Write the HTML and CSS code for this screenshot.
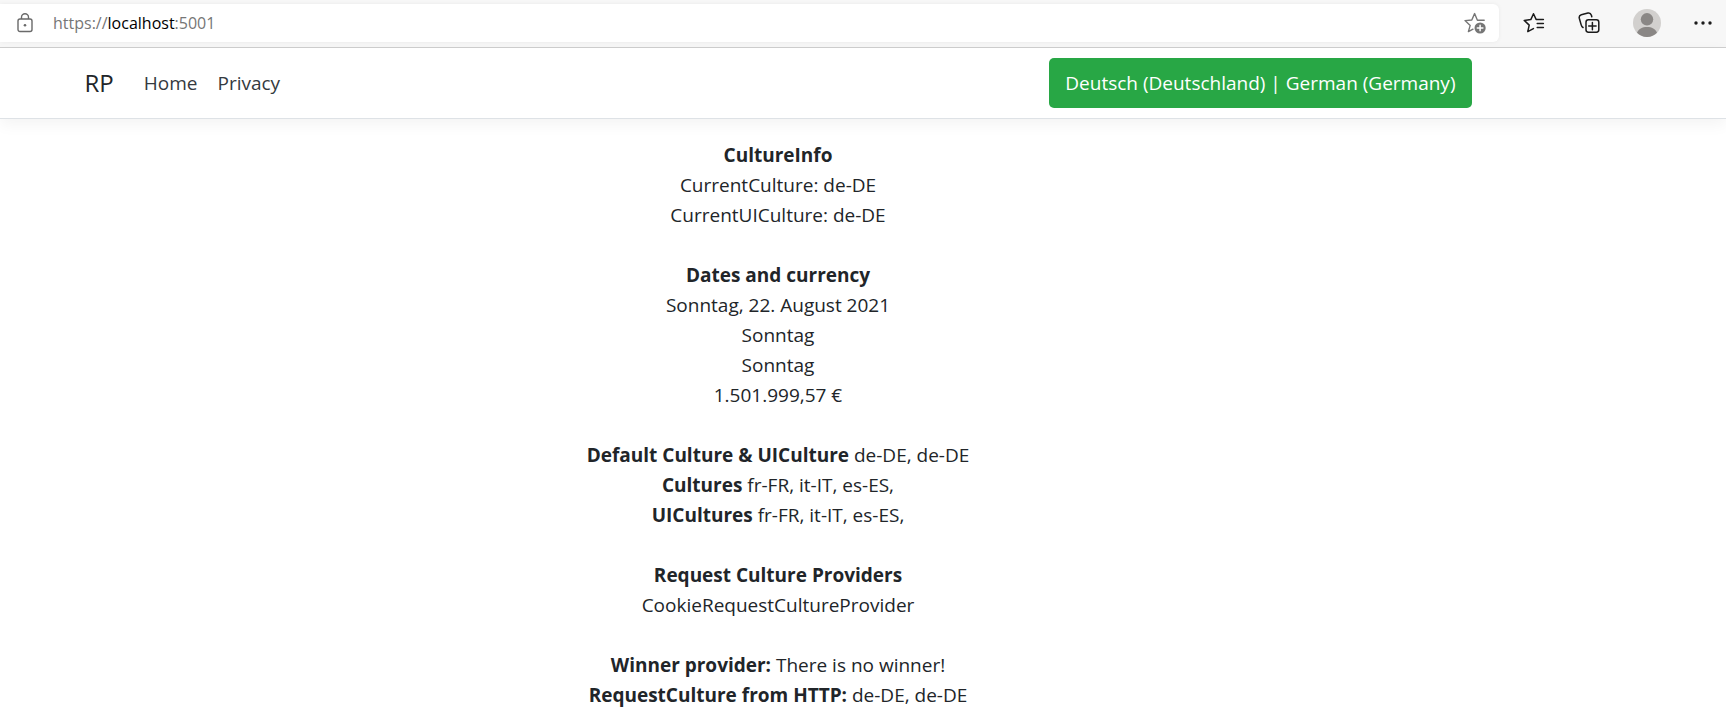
FILE: index.html
```html
<!DOCTYPE html>
<html lang="en">
<head>
<meta charset="utf-8">
<title>Home page - RP</title>
<link rel="stylesheet" href="styles.css">
</head>
<body>
<div class="toolbar">
  <div class="address">
    <svg class="lock" width="16" height="20" viewBox="0 0 16 20" fill="none" stroke="#6a6a6a" stroke-width="1.4" aria-hidden="true">
      <rect x="1" y="6" width="14" height="12.5" rx="2"/>
      <path d="M4.5 6V4.2a3.5 3.5 0 0 1 7 0V6"/>
      <circle cx="8" cy="12.3" r="1.3" fill="#6a6a6a" stroke="none"/>
    </svg>
    <div class="url">https://<span class="host">localhost</span>:5001</div>
    <button class="tool" type="button" aria-label="Add to favorites">
      <svg width="22" height="22" viewBox="0 0 22 22" fill="none" stroke="#767676" stroke-width="1.4" stroke-linejoin="round" stroke-linecap="round" aria-hidden="true">
        <path d="M20.2 8.2H13.4L10.6 1.6 7.8 8 1 8.6l5.2 4.8L4.4 19.6 9 17.2"/>
        <circle cx="16.1" cy="16" r="5.6" fill="#767676" stroke="none"/>
        <path d="M16.1 13.2v5.6M13.3 16h5.6" stroke="#fff" stroke-width="1.5"/>
      </svg>
    </button>
  </div>
  <div class="tools">
    <button class="tool" type="button" aria-label="Favorites">
      <svg width="22" height="22" viewBox="0 0 22 22" fill="none" stroke="#1b1b1b" stroke-width="1.5" stroke-linejoin="round" stroke-linecap="round" aria-hidden="true">
        <path d="M20.4 7.4H13.1L10.5 1.8 7.8 7.6 1.2 8.4l5 4.7L4.8 19.6l5.6-3"/>
        <path d="M14.2 11.5h6.2M14.2 15.6h6.2"/>
      </svg>
    </button>
    <button class="tool" type="button" aria-label="Collections">
      <svg width="22" height="22" viewBox="0 0 22 22" fill="none" stroke="#1b1b1b" stroke-width="1.5" stroke-linejoin="round" stroke-linecap="round" aria-hidden="true">
        <rect x="8" y="7.8" width="12.8" height="12.4" rx="2.4"/>
        <path d="M14.4 10.4v7.4M10.7 14.1h7.4"/>
        <path d="M5 15.500C3.800 14.800 3.400 13.800 3.100 12.600L1.300 6.200C.900 4.500 1.600 3.300 3.300 2.800L9.900 1.100C11.800.700 12.800 1.500 13.400 3.200L13.800 4.700"/>
      </svg>
    </button>
    <button class="tool" type="button" aria-label="Profile">
      <svg width="28" height="28" viewBox="0 0 28 28" aria-hidden="true">
        <circle cx="14" cy="14" r="14" fill="#d2d0ce"/>
        <circle cx="14" cy="10.300" r="6.200" fill="#8a8785"/>
        <path d="M4 23.800C5.500 19.800 9.200 18 14 18s8.500 1.800 10 5.800A14 14 0 0 1 4 23.800Z" fill="#8a8785"/>
      </svg>
    </button>
    <button class="tool" type="button" aria-label="Settings and more">
      <svg width="18" height="18" viewBox="0 0 18 18" fill="#1b1b1b" aria-hidden="true">
        <circle cx="2" cy="9" r="1.700"/><circle cx="9" cy="9" r="1.700"/><circle cx="16" cy="9" r="1.700"/>
      </svg>
    </button>
  </div>
</div>
<div class="page">
  <header class="navbar">
    <nav class="nav-row">
      <a class="brand" href="#">RP</a>
      <a class="nav-link" href="#">Home</a>
      <a class="nav-link" href="#">Privacy</a>
      <button class="culture" type="button">Deutsch (Deutschland) | German (Germany)</button>
    </nav>
  </header>
  <main class="content">
    <section>
      <p><b>CultureInfo</b></p>
      <p>CurrentCulture: de-DE</p>
      <p>CurrentUICulture: de-DE</p>
    </section>
    <section>
      <p><b>Dates and currency</b></p>
      <p>Sonntag, 22. August 2021</p>
      <p>Sonntag</p>
      <p>Sonntag</p>
      <p>1.501.999,57 €</p>
    </section>
    <section>
      <p><b>Default Culture &amp; UICulture</b> de-DE, de-DE</p>
      <p><b>Cultures</b> fr-FR, it-IT, es-ES,</p>
      <p><b>UICultures</b> fr-FR, it-IT, es-ES,</p>
    </section>
    <section>
      <p><b>Request Culture Providers</b></p>
      <p>CookieRequestCultureProvider</p>
    </section>
    <section>
      <p><b>Winner provider:</b> There is no winner!</p>
      <p><b>RequestCulture from HTTP:</b> de-DE, de-DE</p>
    </section>
  </main>
</div>
</body>
</html>
```
FILE: styles.css
```css
* { box-sizing: border-box; }

body {
  margin: 0;
  background: #fff;
  color: #212529;
  font-family: "Segoe UI", "Open Sans", "Noto Sans", sans-serif;
  font-size: 19px;
  line-height: 30px;
}

button {
  font: inherit;
  border: 0;
  background: none;
  padding: 0;
  cursor: pointer;
}

.toolbar {
  display: flex;
  align-items: center;
  height: 48px;
  padding: 0 14px 1px 0;
  background: #f7f7f7;
  border-bottom: 1px solid #cfcfcf;
}

.address {
  flex: 1;
  display: flex;
  align-items: center;
  height: 38px;
  padding: 0 13px 0 17px;
  background: #fff;
  border-radius: 0 6px 6px 0;
  box-shadow: 0 0 4px rgba(0, 0, 0, .06);
}

.url {
  flex: 1;
  margin-left: 20px;
  font-size: 16px;
  color: #767676;
}

.host { color: #000; }

.tool { display: flex; }

.tools {
  display: flex;
  align-items: center;
  gap: 33px;
  margin-left: 24px;
}

.navbar {
  padding: 10px 170px 10px 0;
  border-bottom: 1px solid #dee2e6;
  box-shadow: 0 5px 15px rgba(0, 0, 0, .05);
}

.nav-row {
  display: flex;
  align-items: center;
  max-width: 1425px;
  margin: 0 auto;
  padding: 0 19px;
}

.nav-row a { text-decoration: none; }

.brand {
  margin-right: 20px;
  font-size: 24px;
  color: #212529;
}

.nav-link {
  padding: 0 10px;
  color: #343a40;
}

.culture {
  margin-left: auto;
  padding: 10px 16px;
  border-radius: 5px;
  background: #28a745;
  color: #fff;
}

.content {
  display: grid;
  gap: 30px;
  padding: 21px 170px 10px 0;
  text-align: center;
}

.content p { margin: 0; }
```
